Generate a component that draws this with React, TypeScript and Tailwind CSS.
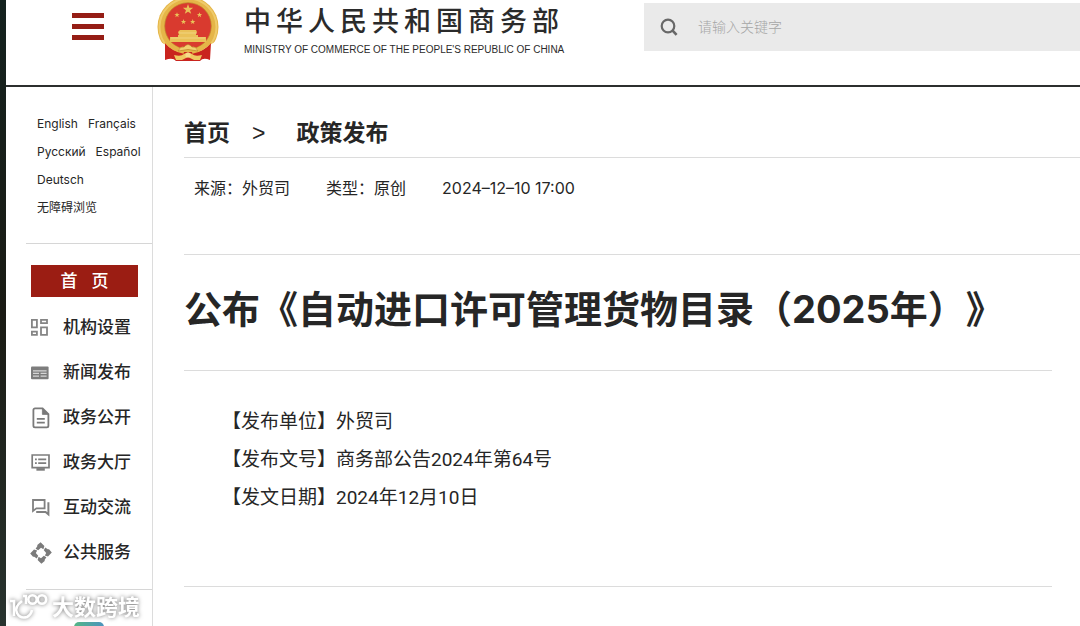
import React, { useState } from "react";

type TNavItem = {
  label: string;
  icon: React.ReactNode;
};

const STAR = "0,-1 0.24,-0.32 0.95,-0.31 0.38,0.12 0.59,0.81 0,0.4 -0.59,0.81 -0.38,0.12 -0.95,-0.31 -0.24,-0.32";

const Emblem = () => (
  <svg className="shrink-0" width="62" height="62" viewBox="0 0 62 62" aria-hidden="true">
    <clipPath id="ring">
      <path d="M0 -5 H62 V40 L50 46 Q40 54 31 54 Q20 54 11 46 L0 40 Z" />
    </clipPath>
    <circle cx="31" cy="27" r="30.5" fill="#e5b548" clipPath="url(#ring)" />
    <circle cx="31" cy="27" r="28.5" fill="none" stroke="#efcb6a" strokeWidth="2" clipPath="url(#ring)" />
    <circle cx="31" cy="26" r="23.3" fill="#d93a2f" stroke="#bf8a2b" strokeWidth="0.7" />
    <g fill="#eac158">
      <polygon points={STAR} transform="translate(31 9.5) scale(5.4)" />
      <polygon points={STAR} transform="translate(20 15) scale(2.8)" />
      <polygon points={STAR} transform="translate(42.5 15) scale(2.8)" />
      <polygon points={STAR} transform="translate(26.5 21.8) scale(2.8)" />
      <polygon points={STAR} transform="translate(35.7 21.8) scale(2.8)" />
      <path d="M23 30 H39 L40 32 L39 33 V35 H41 V37 H49 V42 H13 V37 H21 V35 H22 L21 32 Z" />
    </g>
    <path d="M22 33 H40 M14 38 H48" stroke="#f4d98a" strokeWidth="0.8" />
    <path d="M8 43 Q16 52 25 52 L37 52 Q46 52 54 43 L53 60 Q46 57 43 61 H19 Q16 57 8 60 Z" fill="#c9241e" />
    <path d="M10 42 Q17 50 27 51.5 M52 42 Q45 50 35 51.5" fill="none" stroke="#e5b548" strokeWidth="4.5" />
    <path d="M21 51 Q23 46 27 47 Q31 42 35 47 Q39 46 41 51 Q31 48 21 51 Z" fill="#f1cf70" stroke="#b98227" strokeWidth="0.6" />
    <path d="M17 55 Q24 57 27 54 Q31 51 35 54 Q38 57 45 55 L43 60 H37 L31 57 L25 60 H19 Z" fill="#efc961" />
    <circle cx="31" cy="55" r="2.6" fill="#f6dc8c" />
  </svg>
);

const navItems: TNavItem[] = [
  {
    label: "机构设置",
    icon: (
      <g fill="none" stroke="#858585" strokeWidth="1.8">
        <path d="M1.9 2.9h5v7.4h-5zM11 2.9h6v3.2h-6zM1.9 14.6h5v3.2h-5zM11 10.4h6v7.4h-6z" />
      </g>
    ),
  },
  {
    label: "新闻发布",
    icon: (
      <g>
        <rect x="1" y="4.4" width="17.6" height="12.8" rx="1" fill="#7d7d7d" />
        <path d="M3 8.8h13.6M3 11.4h6M10.6 11.4h6M3 14.2h6M10.6 14.2h6" stroke="#d6d6d6" strokeWidth="1.3" />
      </g>
    ),
  },
  {
    label: "政务公开",
    icon: (
      <g fill="none" stroke="#7a7a7a" strokeWidth="1.8">
        <path d="M5 1.4h7.6l5.8 5.8v11.6a1.6 1.6 0 0 1-1.6 1.6H5a1.6 1.6 0 0 1-1.6-1.6V3A1.6 1.6 0 0 1 5 1.4z" />
        <path d="M12.4 1.6v5.8h5.8z" fill="#7a7a7a" strokeWidth="0.8" />
        <path d="M6.8 11.8h8M6.8 15.6h8" />
      </g>
    ),
  },
  {
    label: "政务大厅",
    icon: (
      <g fill="none" stroke="#7d7d7d" strokeWidth="1.7">
        <path d="M2.2 3h16.8v12.6H2.2z" />
        <path d="M5 7.4h1.8M8.2 7.4h8M5 11.2h1.8M8.2 11.2h8" />
        <path d="M6.4 17.4h8.4" strokeWidth="2.6" />
      </g>
    ),
  },
  {
    label: "互动交流",
    icon: (
      <g fill="none" stroke="#808080" strokeWidth="1.8">
        <path d="M3 3h11.6v8.4H6.4L3 14z" />
        <path d="M18.4 5.2V17.4l-2.8-2.4H6.2" strokeWidth="2" />
      </g>
    ),
  },
  {
    label: "公共服务",
    icon: (
      <g fill="#7b7b7b">
        {[0, 90, 180, 270].map((deg) => (
          <path
            key={deg}
            transform={`rotate(${deg} 11 11)`}
            d="M10.6 0.2 L14.4 4 L13.4 7.2 L11 5.8 L8.2 8.2 L5.6 6.8 L7.6 3.8 L7 3.2 Z"
          />
        ))}
      </g>
    ),
  },
];

const Header = () => {
  const [keyword, setKeyword] = useState("");

  return (
    <header className="flex h-[87px] items-start border-b-2 border-[#2c2f2e]">
      <button type="button" aria-label="菜单" className="mt-[13px] ml-[66px] flex w-8 flex-col gap-1.5">
        <span className="h-[5px] bg-[#951d15]" />
        <span className="h-[5px] bg-[#951d15]" />
        <span className="h-[5px] bg-[#951d15]" />
      </button>
      <a href="#" className="ml-[53px] flex shrink-0 gap-[25px] text-[#2b2b2b]">
        <Emblem />
        <div>
          <div className="mt-1 flex gap-[5px] text-[27px] leading-9 font-medium">
            {"中华人民共和国商务部".split("").map((char) => (
              <span key={char}>{char}</span>
            ))}
          </div>
          <div className="mt-1 font-['Liberation_Sans',sans-serif] text-[10px] leading-3 whitespace-nowrap">
            MINISTRY OF COMMERCE OF THE PEOPLE'S REPUBLIC OF CHINA
          </div>
        </div>
      </a>
      <form
        onSubmit={(e) => e.preventDefault()}
        className="mt-[3px] ml-auto flex h-12 w-[436px] items-center gap-5 bg-[#eaeaea] pl-4"
      >
        <button type="submit" aria-label="搜索">
          <svg width="18" height="18" viewBox="0 0 18 18" fill="none" stroke="#686868" strokeWidth="2.2">
            <circle cx="8" cy="8" r="6.3" />
            <path d="M12.4 12.4 L16.6 16.8" strokeWidth="2.6" />
          </svg>
        </button>
        <input
          type="text"
          aria-label="关键字"
          placeholder="请输入关键字"
          value={keyword}
          onChange={(e) => setKeyword(e.target.value)}
          className="min-w-0 flex-1 bg-transparent text-sm font-light placeholder:text-[#a6a6a6] focus:outline-none"
        />
      </form>
    </header>
  );
};

const Sidebar = () => (
  <aside className="flex w-[147px] shrink-0 flex-col border-r border-[#dcdcdc] pl-5">
    <div className="flex h-[157px] flex-col border-b border-[#d6d6d6] pt-[23px] pl-[11px] text-xs leading-7 whitespace-nowrap">
      <div className="flex gap-2.5">
        <a href="#">English</a>
        <a href="#">Français</a>
      </div>
      <div className="flex gap-2.5">
        <a href="#">Русский</a>
        <a href="#">Español</a>
      </div>
      <a href="#">Deutsch</a>
      <a href="#">无障碍浏览</a>
    </div>
    <nav className="mt-[21px] flex h-[325px] flex-col border-b border-[#d6d6d6] pr-[14px] pl-[5px] text-[17px] font-medium">
      <a href="#" className="flex h-8 items-center justify-center gap-[14px] bg-[#9b1d13] pt-0.5 text-white">
        <span>首</span>
        <span>页</span>
      </a>
      <div className="mt-2 flex flex-col">
        {navItems.map((item) => (
          <a key={item.label} href="#" className="flex h-[45px] items-center gap-[11px] whitespace-nowrap">
            <svg className="-ml-px shrink-0" width="22" height="22" viewBox="0 0 22 22" aria-hidden="true">
              {item.icon}
            </svg>
            {item.label}
          </a>
        ))}
      </div>
    </nav>
    <div className="mt-8 ml-12 h-[5px] w-[30px] rounded-t-lg bg-linear-to-r from-[#55b584] to-[#4c93bd]" />
  </aside>
);

const Article = () => (
  <main className="min-w-0 flex-1 pl-[31px]">
    <nav className="flex h-[71px] items-center border-b border-[#dcdcdc] pt-[22px] text-[23px] font-bold">
      <a href="#">首页</a>
      <span className="ml-[22px] font-['Liberation_Sans',sans-serif] font-normal">&gt;</span>
      <a href="#" className="ml-[31px]">政策发布</a>
    </nav>
    <div className="flex h-[97px] gap-9 border-b border-[#dcdcdc] pt-[18px] pl-[10px] text-base leading-6">
      <span>来源：外贸司</span>
      <span>类型：原创</span>
      <span>2024–12–10 17:00</span>
    </div>
    <div className="mr-7">
      <h1 className="flex h-[116px] items-center border-b border-[#dcdcdc] pb-1.5 text-[38px] font-bold whitespace-nowrap [text-spacing-trim:space-all]">
        公布《自动进口许可管理货物目录（2025年）》
      </h1>
      <div className="h-[216px] border-b border-[#dcdcdc] pt-8 pl-[38px] font-['Roboto','Noto_Sans_CJK_SC',sans-serif] text-[19px] leading-[38px]">
        <p>【发布单位】外贸司</p>
        <p>【发布文号】商务部公告2024年第64号</p>
        <p>【发文日期】2024年12月10日</p>
      </div>
    </div>
  </main>
);

const Watermark = () => (
  <div className="pointer-events-none absolute bottom-1 left-2 flex items-center gap-1 text-white drop-shadow-[0_0_2px_#777777]">
    <svg width="40" height="30" viewBox="0 0 40 30" fill="none" stroke="currentColor" strokeWidth="2.6">
      <path d="M2 9 H6 V24" />
      <path d="M14 9 Q6 15 9 21 Q12 27 19 25 Q23 23 24 18" />
      <path d="M15 4 H18 V12" />
      <circle cx="24.5" cy="7.5" r="4.2" />
      <circle cx="34" cy="7.5" r="4.2" />
    </svg>
    <span className="text-[22px] leading-8 font-bold">大数跨境</span>
  </div>
);

export default function App() {
  return (
    <div className="relative flex min-h-screen bg-white font-['Inter','Noto_Sans_CJK_SC',sans-serif] text-[#262626]">
      <div className="w-1.5 shrink-0 bg-linear-to-b from-[#14221f] via-[#1a1b14] to-[#28332f]" />
      <div className="flex min-w-0 flex-1 flex-col">
        <Header />
        <div className="flex flex-1">
          <Sidebar />
          <Article />
        </div>
      </div>
      <Watermark />
    </div>
  );
}
